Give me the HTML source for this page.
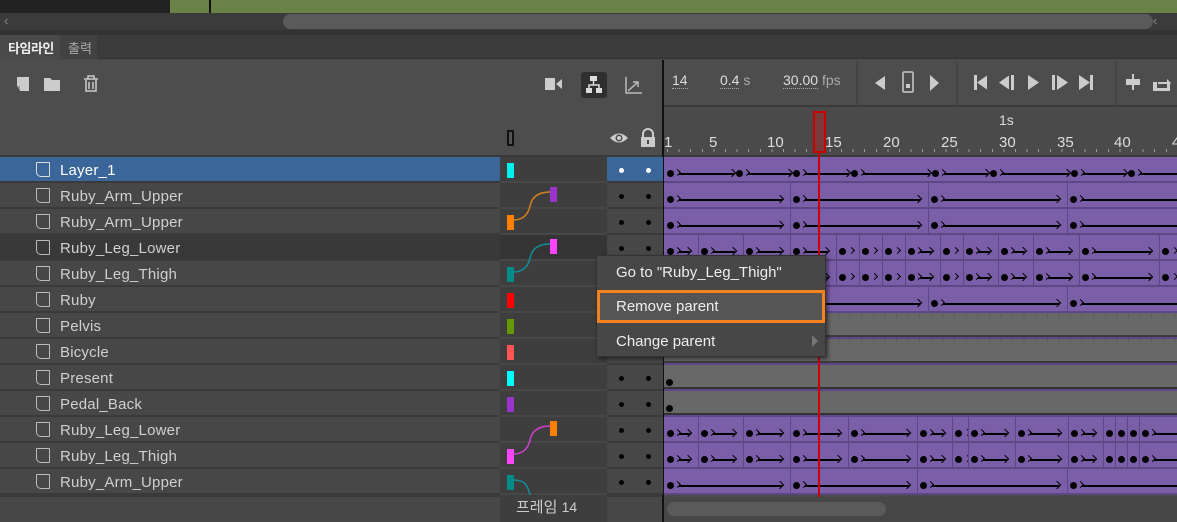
<!DOCTYPE html>
<html><head><meta charset="utf-8">
<style>
*{margin:0;padding:0;box-sizing:border-box}
body{width:1177px;height:522px;overflow:hidden;background:#4a4a4a;position:relative;font-family:"Liberation Sans","Noto Sans CJK KR",sans-serif;font-size:15px;color:#d8d8d8}
.a{position:absolute}
.row{position:absolute;left:0;width:500px;height:26px;background:#474747;border-bottom:2px solid #3a3a3a}
.row .ic{position:absolute;left:36px;top:5px;width:14px;height:15px;border:1.5px solid #bbb;border-radius:1px 1px 1px 5px}
.row .nm{position:absolute;left:60px;top:5px;font-size:15px;color:#d0d0d0;letter-spacing:.2px}
.pc{position:absolute;left:500px;width:107px;height:26px;background:#3e3e3e;border-bottom:2px solid #474747}
.ev{position:absolute;left:607px;width:56px;height:26px;background:#474747;border-bottom:2px solid #3a3a3a}
.ev i{position:absolute;top:11px;width:5px;height:5px;border-radius:50%;background:#000}
.mk{position:absolute;width:7px;height:15px}
.tl{position:absolute;left:664px;width:513px;height:26px;overflow:hidden}
.seg{position:absolute;top:0;height:24px;background:#7b5ea8;border-left:1px solid #5d4785}
.dot{position:absolute;top:13px;width:7px;height:7px;border-radius:50%;background:#000}
.ln{position:absolute;top:16px;height:1.5px;background:#000}
.ah{position:absolute;top:13px;width:6px;height:6px;border-top:1.5px solid #000;border-right:1.5px solid #000;transform:rotate(45deg)}
.ch{position:absolute;top:13px;width:5px;height:5px;border-top:1.2px solid #000;border-right:1.2px solid #000;transform:rotate(45deg)}
.num{position:absolute;top:134px;font-size:15px;color:#ddd}
</style></head><body>
<div class="a" style="left:0;top:0;width:170px;height:13px;background:#222"></div>
<div class="a" style="left:170px;top:0;width:1007px;height:13px;background:#6a8148"></div>
<div class="a" style="left:209px;top:0;width:2px;height:13px;background:#111"></div>
<div class="a" style="left:0;top:13px;width:1177px;height:17px;background:#3b3b3b"></div>
<div class="a" style="left:283px;top:14px;width:870px;height:15px;background:#5a5a5a;border-radius:8px"></div>
<div class="a" style="left:4px;top:13px;color:#888;font-size:13px">‹</div>
<div class="a" style="left:1153px;top:13px;color:#888;font-size:13px">‹</div>
<div class="a" style="left:0;top:30px;width:1177px;height:5px;background:#333"></div>
<div class="a" style="left:0;top:35px;width:1177px;height:24px;background:#3b3b3b;border-bottom:1px solid #333"></div>
<div class="a" style="left:0;top:35px;width:60px;height:25px;background:#4a4a4a;color:#eee;font-size:13px;font-weight:bold;padding:3px 0 0 8px;white-space:nowrap;letter-spacing:-0.5px">타임라인</div>
<div class="a" style="left:60px;top:35px;width:37px;height:24px;background:#424242;color:#aaa;font-size:13px;padding:3px 0 0 8px;white-space:nowrap">출력</div>
<div class="a" style="left:0;top:60px;width:662px;height:97px;background:#4d4d4d;border-bottom:2px solid #3a3a3a"></div>
<svg class="a" style="left:14px;top:74px" width="90" height="20"><path d="M3 3h12v14H6v-5H3z" fill="#ccc"/><path d="M3 12h3v5z" fill="#999"/><path d="M30 4h6l2 2h8v11H30z" fill="#ccc"/><g fill="none" stroke="#ccc" stroke-width="1.5"><path d="M70 5h14M74 5V2h6v3M72 6v11h10V6M75 8v7M79 8v7"/></g></svg>
<svg class="a" style="left:540px;top:72px" width="110" height="26"><path d="M5 6h10v12H5z M16 12l6-5v10z" fill="#ccc"/><rect x="41" y="0" width="26" height="26" rx="3" fill="#2f2f2f"/><g fill="#ddd"><rect x="50" y="4" width="7" height="5"/><rect x="46" y="16" width="6" height="5"/><rect x="56" y="16" width="6" height="5"/></g><path d="M53.5 9v4M49 16v-3h10v3" stroke="#ddd" stroke-width="1.5" fill="none"/><path d="M86 5v16h16M88 19l10-9M93 10h5v5" stroke="#bbb" stroke-width="1.5" fill="none"/></svg>
<div class="a" style="left:507px;top:130px;width:7px;height:16px;border:2px solid #111;background:#555;border-radius:1px"></div>
<svg class="a" style="left:609px;top:128px" width="50" height="20"><path d="M1 10q9-9 18 0q-9 9-18 0z" fill="#ccc"/><circle cx="10" cy="10" r="3.5" fill="#4d4d4d"/><circle cx="10" cy="10" r="2" fill="#ccc"/><path d="M34 9V6a5 5 0 0 1 10 0v3" stroke="#ccc" stroke-width="2" fill="none"/><rect x="32" y="9" width="14" height="10" fill="#ccc"/><rect x="38" y="12" width="2" height="4" fill="#4d4d4d"/></svg>
<div class="a" style="left:662px;top:60px;width:2px;height:462px;background:#111"></div>
<div class="a" style="left:664px;top:60px;width:513px;height:47px;background:#4d4d4d;border-bottom:2px solid #3a3a3a"></div>
<div class="a" style="left:856px;top:62px;width:2px;height:44px;background:#444"></div>
<div class="a" style="left:956px;top:62px;width:2px;height:44px;background:#444"></div>
<div class="a" style="left:1115px;top:62px;width:2px;height:44px;background:#444"></div>
<div class="a" style="left:672px;top:72px;font-size:14px;color:#ddd;border-bottom:1px dotted #aaa">14</div>
<div class="a" style="left:720px;top:72px;font-size:14px;color:#ddd"><span style="border-bottom:1px dotted #aaa">0.4</span> <span style="color:#aaa">s</span></div>
<div class="a" style="left:783px;top:72px;font-size:14px;color:#ddd"><span style="border-bottom:1px dotted #aaa">30.00</span> <span style="color:#aaa">fps</span></div>
<svg class="a" style="left:870px;top:70px" width="307" height="26"><g fill="#ccc"><path d="M6 13l10-7v14z" transform="translate(-1 0)"/><rect x="33" y="2" width="10" height="20" rx="1" fill="none" stroke="#ccc" stroke-width="1.5"/><rect x="36" y="14" width="4" height="4"/><path d="M60 5l9 8-9 8z"/><rect x="104" y="5" width="3" height="15"/><path d="M107 12.5l10-7v14z"/><path d="M129 12.5l10-7v14z"/><rect x="141" y="5" width="3" height="15"/><path d="M158 5l11 7.5-11 7.5z"/><rect x="182" y="5" width="3" height="15"/><path d="M187 5l11 7.5-11 7.5z"/><path d="M209 5l11 7.5-11 7.5z"/><rect x="220" y="5" width="3" height="15"/><rect x="256" y="9" width="14" height="6"/><rect x="262" y="4" width="2" height="16"/><path d="M283 12h4v6h10v-4h3v7h-17z"/><path d="M288 12h9v-3l4 4-4 4v-3h-9z"/></g></svg>
<div class="a" style="left:664px;top:107px;width:513px;height:50px;background:#4a4a4a;border-bottom:2px solid #3a3a3a;background-image:repeating-linear-gradient(90deg,#999 0 1px,transparent 1px 11.6px);background-size:513px 3px;background-position:3px 42px;background-repeat:no-repeat"></div>
<div class="a" style="left:999px;top:112px;font-size:14px;color:#ddd">1s</div>
<div class="num" style="left:664px">1</div><div class="num" style="left:709px">5</div><div class="num" style="left:767px">10</div><div class="num" style="left:825px">15</div><div class="num" style="left:883px">20</div><div class="num" style="left:941px">25</div><div class="num" style="left:999px">30</div><div class="num" style="left:1057px">35</div><div class="num" style="left:1114px">40</div><div class="num" style="left:1172px">4</div>
<div id="rows"></div>
<svg class="a" style="left:500px;top:157px" width="107" height="338">
<g fill="none" stroke-width="1.5">
<path d="M13 63q14 0 17-14t20-14" stroke="#d48020"/>
<path d="M13 115q14 0 17-14t20-14" stroke="#10909a"/>
<path d="M13 297q14 0 17-14t20-14" stroke="#d040d0"/>
<path d="M13 323q10 0 13 5t4 10" stroke="#10909a"/>
</g></svg>
<div class="a" style="left:813px;top:111px;width:13px;height:42px;background:#7a3a3a;border:2px solid #c00"></div>
<div class="a" style="left:818px;top:153px;width:2px;height:345px;background:#c00"></div>
<div class="a" style="left:0;top:495px;width:662px;height:27px;background:#474747;border-top:2px solid #3a3a3a"></div>
<div class="a" style="left:500px;top:495px;width:107px;height:27px;background:#3e3e3e"></div>
<div class="a" style="left:516px;top:496px;font-size:15px;color:#ccc">프레임 <span style="font-size:14px">14</span></div>
<div class="a" style="left:664px;top:497px;width:513px;height:25px;background:#474747"></div>
<div class="a" style="left:667px;top:502px;width:219px;height:14px;background:#5a5a5a;border-radius:7px"></div>
<div class="a" style="left:596px;top:255px;width:230px;height:102px;background:#474747;border:1px solid #333;box-shadow:2px 2px 4px rgba(0,0,0,.5)"></div>
<div class="a" style="left:616px;top:264px;font-size:15px;color:#eee">Go to "Ruby_Leg_Thigh"</div>
<div class="a" style="left:597px;top:290px;width:228px;height:33px;background:#555;border:3px solid #f5821f"></div>
<div class="a" style="left:616px;top:298px;font-size:15px;color:#eee">Remove parent</div>
<div class="a" style="left:616px;top:333px;font-size:15px;color:#eee">Change parent</div>
<div class="a" style="left:812px;top:335px;width:0;height:0;border-left:6px solid #777;border-top:6px solid transparent;border-bottom:6px solid transparent"></div>
<script>
var names=["Layer_1","Ruby_Arm_Upper","Ruby_Arm_Upper","Ruby_Leg_Lower","Ruby_Leg_Thigh","Ruby","Pelvis","Bicycle","Present","Pedal_Back","Ruby_Leg_Lower","Ruby_Leg_Thigh","Ruby_Arm_Upper"];
var mk=[["#00f0f0",0],["#9933cc",1],["#ff8000",0],["#ff44ff",1],["#008b8b",0],["#ff0000",0],["#669900",0],["#ff5555",0],["#00ffff",0],["#9933cc",0],["#ff8000",1],["#ff44ff",0],["#008b8b",0]];
var A=[664,698,743,790,836,859,882,905,940,963,998,1033,1079,1159,1190];
var B=[664,698,743,790,848,917,952,968,1015,1068,1103,1115,1127,1139,1190];
var C=[664,790,928,1067,1190];
var segs=[null,C,C,A,A,C,"g","g","d","d",B,B,[664,790,917,1067,1190]];
var h="";
for(var i=0;i<13;i++){var t=157+26*i;var sel=i==0;
var bg=sel?"#3b6699":(i==3?"#393939":"#474747");
h+='<div class="row" style="top:'+t+'px;background:'+bg+'"><div class="ic"'+(sel?' style="border-color:#ddd"':'')+'></div><div class="nm"'+(sel?' style="color:#fff"':'')+'>'+names[i]+'</div></div>';
h+='<div class="pc" style="top:'+t+'px'+(i==3?';background:#353535':'')+'"><div class="mk" style="left:'+(mk[i][1]?50:7)+'px;top:'+(mk[i][1]?4:6)+'px;background:'+mk[i][0]+'"></div></div>';
h+='<div class="ev" style="top:'+t+'px'+(sel?';background:#3b6699':'')+'"><i style="left:12px'+(sel?';background:#fff':'')+'"></i><i style="left:39px'+(sel?';background:#fff':'')+'"></i></div>';
h+='<div class="tl" style="top:'+t+'px">';
var s=segs[i];
if(i==0){h+='<div class="seg" style="left:0;width:513px;border-left:0"></div>';
 var ks=[669,738,795,853,934,992,1073,1130,1190];
 for(var k=0;k<ks.length-1;k++){h+=seg2(ks[k],ks[k+1]);}
}else if(s=="g"){h+='<div class="a" style="left:0;top:0;width:513px;height:24px;background:#686868;border-bottom:2px solid #3a3a3a;background-image:repeating-linear-gradient(90deg,#5a5a5a 0 1px,transparent 1px 11.6px);background-size:513px 4px;background-repeat:no-repeat"></div>';}
else if(s=="d"){h+='<div class="a" style="left:0;top:0;width:513px;height:24px;background:#686868;border-bottom:2px solid #333"></div><div class="dot" style="left:2px;top:14px"></div>';}
else{for(var k=0;k<s.length-1;k++){var x=s[k]-664,w=s[k+1]-s[k];h+='<div class="seg" style="left:'+x+'px;width:'+w+'px;'+(k==0?'border-left:0':'')+'"></div>';h+=seg2(s[k]+5,s[k+1]-4);}}
h+='<div class="a" style="left:0;top:24px;width:513px;height:2px;background:#5d4785"></div></div>';}
function seg2(a,b){var x=a-664,e=b-664,r='<div class="dot" style="left:'+(x-2)+'px"></div>';
 if(e-x<24){r+='<div class="ch" style="left:'+(x+8)+'px"></div>';return r;}
 r+='<div class="ch" style="left:'+(x+6)+'px"></div><div class="ln" style="left:'+(x+10)+'px;width:'+(e-x-14)+'px"></div><div class="ah" style="left:'+(e-9)+'px"></div>';return r;}
document.getElementById("rows").innerHTML=h;
</script>
</body></html>
